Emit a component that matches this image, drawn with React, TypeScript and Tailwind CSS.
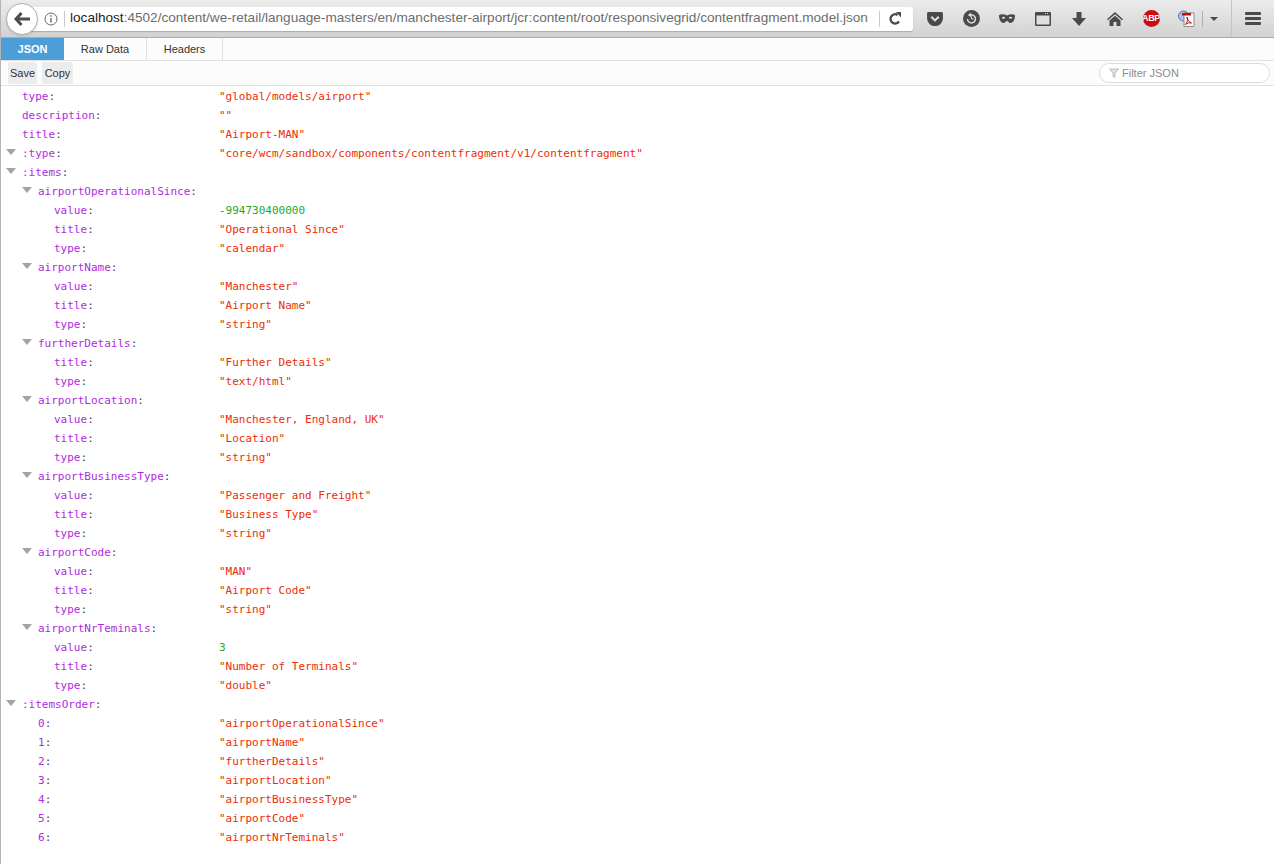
import { ReactNode } from 'react';

type Row = {
  depth: number;
  name: string;
  value?: string;
  kind?: 'str' | 'num';
  open?: boolean;
};

const rows: Row[] = [
  { depth: 0, name: 'type', value: '"global/models/airport"' },
  { depth: 0, name: 'description', value: '""' },
  { depth: 0, name: 'title', value: '"Airport-MAN"' },
  { depth: 0, name: ':type', value: '"core/wcm/sandbox/components/contentfragment/v1/contentfragment"', open: true },
  { depth: 0, name: ':items', open: true },
  { depth: 1, name: 'airportOperationalSince', open: true },
  { depth: 2, name: 'value', value: '-994730400000', kind: 'num' },
  { depth: 2, name: 'title', value: '"Operational Since"' },
  { depth: 2, name: 'type', value: '"calendar"' },
  { depth: 1, name: 'airportName', open: true },
  { depth: 2, name: 'value', value: '"Manchester"' },
  { depth: 2, name: 'title', value: '"Airport Name"' },
  { depth: 2, name: 'type', value: '"string"' },
  { depth: 1, name: 'furtherDetails', open: true },
  { depth: 2, name: 'title', value: '"Further Details"' },
  { depth: 2, name: 'type', value: '"text/html"' },
  { depth: 1, name: 'airportLocation', open: true },
  { depth: 2, name: 'value', value: '"Manchester, England, UK"' },
  { depth: 2, name: 'title', value: '"Location"' },
  { depth: 2, name: 'type', value: '"string"' },
  { depth: 1, name: 'airportBusinessType', open: true },
  { depth: 2, name: 'value', value: '"Passenger and Freight"' },
  { depth: 2, name: 'title', value: '"Business Type"' },
  { depth: 2, name: 'type', value: '"string"' },
  { depth: 1, name: 'airportCode', open: true },
  { depth: 2, name: 'value', value: '"MAN"' },
  { depth: 2, name: 'title', value: '"Airport Code"' },
  { depth: 2, name: 'type', value: '"string"' },
  { depth: 1, name: 'airportNrTeminals', open: true },
  { depth: 2, name: 'value', value: '3', kind: 'num' },
  { depth: 2, name: 'title', value: '"Number of Terminals"' },
  { depth: 2, name: 'type', value: '"double"' },
  { depth: 0, name: ':itemsOrder', open: true },
  { depth: 1, name: '0', value: '"airportOperationalSince"' },
  { depth: 1, name: '1', value: '"airportName"' },
  { depth: 1, name: '2', value: '"furtherDetails"' },
  { depth: 1, name: '3', value: '"airportLocation"' },
  { depth: 1, name: '4', value: '"airportBusinessType"' },
  { depth: 1, name: '5', value: '"airportCode"' },
  { depth: 1, name: '6', value: '"airportNrTeminals"' },
];

const depthPad = ['pl-[21px]', 'pl-[37px]', 'pl-[53px]'];
const twistyPad = ['pl-[5px]', 'pl-[21px]', 'pl-[37px]'];

function JsonRow({ row }: { row: Row }) {
  return (
    <div className="flex h-[19px] items-center whitespace-pre font-['DejaVu_Sans_Mono',monospace] text-[11px] leading-[19px]">
      <div className={`relative w-[218px] shrink-0 ${depthPad[row.depth]}`}>
        {row.open && (
          <span className={`absolute left-0 top-[5px] ${twistyPad[row.depth]}`}>
            <span className="block h-0 w-0 border-x-[5px] border-t-[6px] border-x-transparent border-t-[#a3a3a3]" />
          </span>
        )}
        <span className="text-[#b02be0]">{row.name}</span>
        <span className="text-[#3a3f58]">:</span>
      </div>
      {row.value && (
        <span className={row.kind === 'num' ? 'text-[#1fa81f]' : 'text-[#ee2c05]'}>{row.value}</span>
      )}
    </div>
  );
}

function ToolIcon({ children }: { children: ReactNode }) {
  return <div className="flex w-[36px] shrink-0 items-center justify-center">{children}</div>;
}

export default function App() {
  return (
    <div className="h-[864px] w-[1274px] overflow-hidden border-l border-[#b5b5b5] bg-white font-['Liberation_Sans',sans-serif]">
      {/* browser toolbar */}
      <div className="flex h-[38px] items-center border-b border-[#ababab] bg-gradient-to-b from-[#ececec] to-[#d2d2d2]">
        <div className="relative z-10 ml-[5px] flex h-[32px] w-[32px] shrink-0 items-center justify-center rounded-full border border-[#b0b0b0] bg-white shadow-sm">
          <svg width="16" height="14" viewBox="0 0 16 14">
            <path d="M7.500 1 2 7l5.500 6M2.500 7H16" fill="none" stroke="#4d4d4d" strokeWidth="3" />
          </svg>
        </div>
        <div className="-ml-[9px] flex h-[24px] w-[884px] shrink-0 items-center rounded-r-[3px] bg-white shadow-[0_1px_1px_rgba(0,0,0,0.2)]">
          <svg className="ml-[15px] shrink-0" width="14" height="14" viewBox="0 0 14 14">
            <circle cx="7" cy="7" r="6" fill="none" stroke="#6a6a6a" />
            <path d="M7 6v4.500M7 3.200v1.600" stroke="#6a6a6a" strokeWidth="1.400" />
          </svg>
          <div className="ml-[6px] h-[16px] w-px bg-[#c9c9c9]" />
          <div className="ml-[5px] w-[809px] truncate text-[13.600px] text-[#6d6d6d]">
            <span className="text-[#222]">localhost</span>:4502/content/we-retail/language-masters/en/manchester-airport/jcr:content/root/responsivegrid/contentfragment.model.json
          </div>
          <div className="h-[16px] w-px bg-[#c9c9c9]" />
          <svg className="ml-[9px]" width="12" height="13" viewBox="0 0 12 13">
            <path d="M10 9.500A4.600 4.600 0 1 1 8.600 3" fill="none" stroke="#4a4a4a" strokeWidth="2.400" />
            <path d="M7 0h5v5.500z" fill="#4a4a4a" />
          </svg>
        </div>
        <div className="ml-[4px] flex h-full items-center">
          <ToolIcon>
            <svg width="16" height="14" viewBox="0 0 17 15">
              <path d="M1.500 0h14A1.500 1.500 0 0 1 17 1.500V7a8 8 0 0 1-8.500 8A8 8 0 0 1 0 7V1.500A1.500 1.500 0 0 1 1.500 0z" fill="#4a4a4a" />
              <path d="m4.500 5 4 4 4-4" fill="none" stroke="#e4e4e4" strokeWidth="2.200" />
            </svg>
          </ToolIcon>
          <ToolIcon>
            <svg width="17" height="17" viewBox="0 0 17 17">
              <circle cx="8.500" cy="8.500" r="8.500" fill="#4a4a4a" />
              <path d="M6.500 5.500a4 4 0 1 1-2 3.500" fill="none" stroke="#e0e0e0" strokeWidth="1.400" />
              <path d="M8 2.800v4.500L4.800 5z" fill="#e0e0e0" />
              <path d="M8.500 6.500v2.500h2" fill="none" stroke="#e0e0e0" />
            </svg>
          </ToolIcon>
          <ToolIcon>
            <svg width="16" height="9" viewBox="0 0 16 9">
              <path d="M0 1c3-1.300 5.500-.5 8 .5 2.500-1 5-1.800 8-.5 0 4-1.500 8-4.500 8C9.500 9 9.500 7 8 7s-1.500 2-3.500 2C1.500 9 0 5 0 1z" fill="#4a4a4a" />
              <ellipse cx="4.500" cy="3.800" rx="1.700" ry="1" fill="#dcdcdc" />
              <ellipse cx="11.500" cy="3.800" rx="1.700" ry="1" fill="#dcdcdc" />
            </svg>
          </ToolIcon>
          <ToolIcon>
            <svg width="16" height="14" viewBox="0 0 16 14">
              <rect x="0" y="0" width="16" height="14" rx="1.200" fill="#4a4a4a" />
              <rect x="1.500" y="3.500" width="13" height="9" fill="#e0e0e0" />
              <path d="M10 1.500h4" stroke="#dcdcdc" strokeDasharray="1 1" />
            </svg>
          </ToolIcon>
          <ToolIcon>
            <svg width="14" height="14" viewBox="0 0 14 14">
              <path d="M4.500 0h5v6H14l-7 8-7-8h4.500z" fill="#4a4a4a" />
            </svg>
          </ToolIcon>
          <ToolIcon>
            <svg width="16" height="14" viewBox="0 0 16 14">
              <path d="M8 0 0 7.200l1 1L8 2.200l7 6 1-1z" fill="#4a4a4a" />
              <path d="M2.500 8.500 8 3.700l5.500 4.800V14H9.500V10h-3v4h-4z" fill="#4a4a4a" />
            </svg>
          </ToolIcon>
          <ToolIcon>
            <div className="flex h-[17px] w-[17px] items-center justify-center overflow-hidden rounded-full bg-[#c70d0d] text-[9px] font-bold leading-none tracking-[-0.4px] text-white">
              ABP
            </div>
          </ToolIcon>
          <ToolIcon>
            <svg width="18" height="17" viewBox="0 0 18 17">
              <circle cx="5.500" cy="6" r="5" fill="#a9c4e4" stroke="#4d78b0" />
              <path d="M6 3h10v13.500H6z" fill="#fbfbfb" stroke="#777" strokeWidth="0.800" />
              <path d="M4 3h9v2.500H4z" fill="#c80b0b" />
              <path d="M9 7c.5 3 2 5 4.500 6-2.500-.5-4 0-6 1.500C9.500 12 10 9.500 9 7z" fill="none" stroke="#c80b0b" />
            </svg>
          </ToolIcon>
        </div>
        <div className="-ml-[3px] h-[16px] w-px bg-[#b0b0b0]" />
        <div className="ml-[7px] h-0 w-0 border-x-[4px] border-t-[4px] border-x-transparent border-t-[#4a4a4a]" />
        <div className="ml-[13px] h-full w-px bg-[#c4c4c4]" />
        <div className="ml-[13px] flex w-[16px] flex-col gap-[2px]">
          <div className="h-[3px] rounded-[1px] bg-[#4a4a4a]" />
          <div className="h-[3px] rounded-[1px] bg-[#4a4a4a]" />
          <div className="h-[3px] rounded-[1px] bg-[#4a4a4a]" />
        </div>
      </div>

      {/* tabs */}
      <div className="flex h-[23px] border-b border-[#e1e1e1] bg-[#fcfcfc] text-[11px] text-[#333]">
        <div className="flex w-[63px] items-center justify-center bg-[#4c9ed9] font-bold text-white">JSON</div>
        <div className="flex w-[83px] items-center justify-center border-r border-[#e1e1e1]">Raw Data</div>
        <div className="flex w-[76px] items-center justify-center border-r border-[#e1e1e1]">Headers</div>
      </div>

      {/* actions */}
      <div className="flex h-[25px] items-center border-b border-[#e1e1e1] bg-[#fcfcfc] text-[11px] text-[#333]">
        <div className="ml-[7px] flex h-[22px] w-[29px] items-center justify-center rounded-[2px] bg-[#ececec]">Save</div>
        <div className="ml-[5px] flex h-[22px] w-[31px] items-center justify-center rounded-[2px] bg-[#ececec]">Copy</div>
        <div className="ml-auto mr-[4px] flex h-[20px] w-[171px] items-center rounded-full border border-[#dcdcdc] bg-white pl-[9px] text-[#8a8a8a]">
          <svg width="10" height="10" viewBox="0 0 10 10">
            <path d="M.5 1h9L6 5v4.500L4 8.500V5z" fill="#e3e3e3" stroke="#a6a6a6" strokeWidth="0.700" />
          </svg>
          <span className="ml-[3px]">Filter JSON</span>
        </div>
      </div>

      {/* json tree */}
      <div className="pt-[1px]">
        {rows.map((row, i) => (
          <JsonRow key={i} row={row} />
        ))}
      </div>
    </div>
  );
}
